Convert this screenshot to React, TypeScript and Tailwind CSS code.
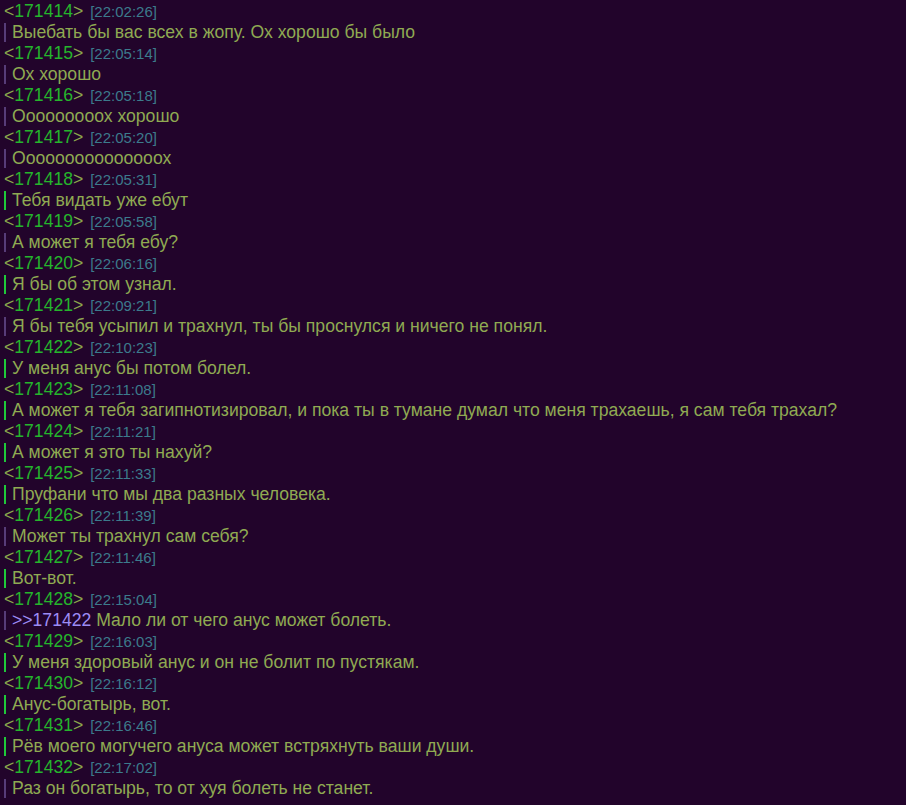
type Msg = {
  id: number;
  time: string;
  text: string;
  green?: boolean;
  reply?: number;
};

const messages: Msg[] = [
  { id: 171414, time: "22:02:26", text: "Выебать бы вас всех в жопу. Ох хорошо бы было" },
  { id: 171415, time: "22:05:14", text: "Ох хорошо" },
  { id: 171416, time: "22:05:18", text: "Ооооооооох хорошо" },
  { id: 171417, time: "22:05:20", text: "Ооооооооооооооох" },
  { id: 171418, time: "22:05:31", text: "Тебя видать уже ебут", green: true },
  { id: 171419, time: "22:05:58", text: "А может я тебя ебу?" },
  { id: 171420, time: "22:06:16", text: "Я бы об этом узнал.", green: true },
  { id: 171421, time: "22:09:21", text: "Я бы тебя усыпил и трахнул, ты бы проснулся и ничего не понял." },
  { id: 171422, time: "22:10:23", text: "У меня анус бы потом болел.", green: true },
  {
    id: 171423,
    time: "22:11:08",
    text: "А может я тебя загипнотизировал, и пока ты в тумане думал что меня трахаешь, я сам тебя трахал?",
    green: true,
  },
  { id: 171424, time: "22:11:21", text: "А может я это ты нахуй?", green: true },
  { id: 171425, time: "22:11:33", text: "Пруфани что мы два разных человека.", green: true },
  { id: 171426, time: "22:11:39", text: "Может ты трахнул сам себя?" },
  { id: 171427, time: "22:11:46", text: "Вот-вот.", green: true },
  { id: 171428, time: "22:15:04", text: "Мало ли от чего анус может болеть.", reply: 171422 },
  { id: 171429, time: "22:16:03", text: "У меня здоровый анус и он не болит по пустякам.", green: true },
  { id: 171430, time: "22:16:12", text: "Анус-богатырь, вот.", green: true },
  { id: 171431, time: "22:16:46", text: "Рёв моего могучего ануса может встряхнуть ваши души.", green: true },
  { id: 171432, time: "22:17:02", text: "Раз он богатырь, то от хуя болеть не станет." },
];

function Message({ msg }: { msg: Msg }) {
  return (
    <div>
      <div className="h-[21px] leading-[21px] whitespace-nowrap">
        <span className="text-[#8aa84c]">&lt;</span>
        <span className="text-[#25b52c]">{msg.id}</span>
        <span className="text-[#8aa84c]">&gt;</span>{" "}
        <span className="ml-[2px] text-[15px] text-[#3c7b8c]">[{msg.time}]</span>
      </div>
      <div
        className={
          "mt-px mb-px h-[19px] leading-[19px] border-l-2 pl-[6px] whitespace-nowrap text-[#8faa52] " +
          (msg.green ? "border-[#1fc93a]" : "border-[#573c78]")
        }
      >
        {msg.reply && <span className="text-[#9d8cf5]">&gt;&gt;{msg.reply} </span>}
        {msg.text}
      </div>
    </div>
  );
}

export default function App() {
  return (
    <div
      className="min-h-screen w-[906px] h-[805px] overflow-hidden bg-[#22042b] pl-1 pt-px text-[17.6px]"
      style={{ fontFamily: '"Liberation Sans", Arial, sans-serif' }}
    >
      {messages.map((m) => (
        <Message key={m.id} msg={m} />
      ))}
    </div>
  );
}
